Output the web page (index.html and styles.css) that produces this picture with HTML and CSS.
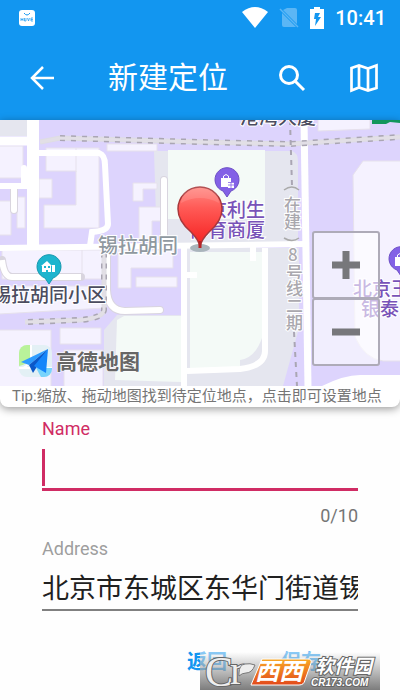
FILE: index.html
```html
<!DOCTYPE html>
<html lang="zh-CN">
<head>
  <meta charset="UTF-8">
  <meta name="viewport" content="width=device-width, initial-scale=1.0">
  <title>新建定位</title>
  <link rel="stylesheet" href="styles.css">
</head>
<body>
  <header class="app-header">
    <!-- Status bar -->
    <div class="status-bar">
      <svg class="notification" width="16" height="16" viewBox="0 0 16 16">
        <rect width="16" height="16" rx="3" fill="#fff"/>
        <path d="M5 3q3 4 6 0" fill="none" stroke="#1296f0"/>
        <path d="M2 8v3M2 9.5h2M4 8v3M5.5 8v3H7V8M8.5 8l1 3 1-3M12 8v3h2M12 9.5h2M12 8h2" fill="none" stroke="#1296f0" stroke-width=".7"/>
      </svg>
      <svg width="26" height="22" viewBox="0 0 26 22">
        <path d="M0 5Q13-5 26 5L13 21z" fill="#fff"/>
      </svg>
      <svg width="20" height="22" viewBox="0 0 20 22">
        <path d="M8 1h8q2 0 2 2v14L4 3zM3 6l14 14H5q-2 0-2-2z" fill="#5bb6f5"/>
        <path d="M1 2l18 18" stroke="#5bb6f5" stroke-width="1.5"/>
      </svg>
      <svg width="14" height="22" viewBox="0 0 14 22">
        <path d="M4 0h6v2h4v20H0V2h4z" fill="#fff"/>
        <path d="M5 6h5L8 10h3L5 19l1-7H4z" fill="#1296f0"/>
      </svg>
      <span class="clock">10:41</span>
    </div>

    <!-- Toolbar -->
    <div class="toolbar">
      <button class="icon-button" type="button" aria-label="Back">
        <svg width="28" height="28" viewBox="0 0 28 28" fill="none" stroke="#fff" stroke-width="2.5">
          <path d="M26 14H4M15 3L4 14l11 11"/>
        </svg>
      </button>
      <h1>新建定位</h1>
      <button class="icon-button" type="button" aria-label="Search">
        <svg width="28" height="28" viewBox="0 0 28 28" fill="none" stroke="#fff" stroke-width="3">
          <circle cx="11" cy="11" r="8.5"/>
          <path d="M17 17l9 9"/>
        </svg>
      </button>
      <button class="icon-button" type="button" aria-label="Map">
        <svg width="30" height="30" viewBox="0 0 30 30" fill="none" stroke="#fff" stroke-width="2.7">
          <path d="M2.5 5L10 2.500l9 3 8.500-3V25L19 27.500l-9-3-7.500 3zM10 2.500v22M19 5.500v22"/>
        </svg>
      </button>
    </div>
  </header>

  <!-- Map card -->
  <section class="map-card">
    <div class="map">
      <svg class="map-canvas" viewBox="0 120 400 266" preserveAspectRatio="xMidYMid slice">
        <defs>
          <linearGradient id="pinFill" x1="0" y1="0" x2="0" y2="1">
            <stop offset="0" stop-color="#ff8a84"/>
            <stop offset=".35" stop-color="#ff5a56"/>
            <stop offset="1" stop-color="#f51d1d"/>
          </linearGradient>
          <clipPath id="logoClip"><rect x="19" y="345" width="33" height="32" rx="8"/></clipPath>
        </defs>

        <rect y="120" width="400" height="266" fill="#ddd4fd"/>

        <!-- Grey plots -->
        <g fill="#e5e6ef">
          <path d="M0 120h27v16H0z"/>
          <path d="M154 151h138q6 2 6 10v83H168v-28h-12z"/>
          <path d="M187 248h112v80l-16 58H187z"/>
          <path d="M104 330l13-15h65v71h-78z"/>
        </g>

        <!-- Green plots -->
        <g fill="#f4faf7">
          <path d="M168 150h97v69h-97z"/>
          <path d="M117 320l7-4h57v66l-66-2z"/>
          <path d="M190 252h72v86q-7 20-22 22v7l-50 3z"/>
        </g>

        <!-- Buildings -->
        <g fill="#f5f2ff" stroke="#e6e1ec">
          <path d="M-1 146h24v32H-1zM-1 201h12v34H-1zM17 197h8v31h-8z"/>
          <path d="M46 148h53v80H44v-23h32v-34H46zM76 148v24M39 179h13v19H39z"/>
          <path d="M107 144h50v7h-50zM133 183h24v6h-14v12h-10zM139 207h22v14h-9v18h-13z"/>
          <path d="M2 250h103v29H2zM-1 286h106v22l-106 6z"/>
          <path d="M82 250v29M118 250h55v18h-42v20h-13zM136 277h41v10h-41z"/>
          <path d="M-1 330h52v57H-1zM60 328h41v16H60zM64 350h39v37H64z"/>
          <path d="M318 115h52v14l-52 2z"/>
          <path d="M363 161h38v200h-18q-18-2-28-24l-2-162z"/>
        </g>

        <!-- Roads -->
        <g fill="none" stroke="#d9d5df" stroke-width="8" stroke-linecap="round">
          <path d="M164 180v66M107 250v40q1 21 18 21l35-1M2 260q2 17 10 17h69M14 188v22"/>
        </g>
        <g fill="none" stroke="#fff" stroke-width="6">
          <path d="M33 119v128" stroke-width="12"/>
          <path d="M0 141h30" stroke-width="9"/>
          <path d="M0 186h30M14 188v22M24 168v18" stroke-linecap="round"/>
          <path d="M38 153h61q6 2 6 12l3 59q0 7-16 8l-2 14"/>
          <path d="M164 180v66M107 250v40q1 21 18 21l35-1" stroke-linecap="round"/>
          <path d="M2 260q2 17 10 17h69"/>
          <path d="M184 246v140M187 371l53-2q25-3 25-18V248M253 246v15M187 275h10"/>
          <path d="M0 248l306-4"/>
          <path d="M304 119l4 268" stroke-width="7"/>
        </g>
        <path d="M322 386q22-11 38-11h40v11z" fill="#fff"/>

        <!-- Railway and metro lines -->
        <g fill="none">
          <path d="M40 142l20-4 140 4 90 2 110-7M25 322l55-2q23-2 24-10V250" stroke="#dedde3" stroke-width="5"/>
          <path d="M60 138l140 4 90 2 110-7M28 322l52-2q23-2 24-10V250" stroke="#aaa6b3" stroke-width="6" stroke-dasharray="5 6"/>
          <path d="M40 142l20-4 140 4 90 2 110-7M25 322l55-2q23-2 24-10V250" stroke="#e2dfe6" stroke-width="3"/>
          <path d="M290 120l2 66M294 332l3 54" stroke="#aaa6b3" stroke-width="2" stroke-dasharray="5 5"/>
        </g>

        <!-- Labels -->
        <g class="label">
          <text class="label-dark" x="240" y="124">港湾大厦</text>
          <text class="label-road" x="98" y="253">锡拉胡同</text>
          <text class="label-dark" x="-8" y="302">锡拉胡同小区</text>
          <text class="label-shop" x="208" y="217">京利生</text>
          <text class="label-shop" x="189" y="237">体育商厦</text>
          <text class="label-shop" x="353" y="296">北京王府</text>
          <text class="label-shop" x="361" y="316">银泰in</text>
          <text class="label-metro" x="284 284" y="211 228">在建</text>
          <text class="label-metro" x="288 286 286 286 286" y="261 279 295 312 329">8号线二期</text>
        </g>
        <path d="M284 190q8-6 15 0M284 238q8 5 15 0" fill="none" stroke="#aaa" stroke-width="1.5"/>
        <path d="M372 120h28v3l-10-1-4 2h-14z" fill="#12965c"/>

        <!-- Places -->
        <g id="shop">
          <path d="M227 197l-4-6a12 12 0 1 1 8 0z" fill="#8361e6" stroke="#6c4fc5"/>
          <path d="M221 178h10v9h-10zM228 182h6v6h-6z" fill="#fff"/>
          <path d="M223.5 178v-2q2.5-3 5 0v2" fill="none" stroke="#fff"/>
          <path d="M228 182.5h6M231 182v6M228 185h6" stroke="#8361e6" stroke-width=".8"/>
        </g>
        <use href="#shop" x="174" y="79"/>
        <path d="M49 284l-4-6a12 12 0 1 1 8 0z" fill="#1db5ce" stroke="#1598ae"/>
        <path d="M41 266l6-5 5 5h-1v6h-9v-6zM52 265h3v7h-3z" fill="#fff"/>
        <path d="M44 266h2v2h-2zM48 266h2v2h-2zM46 270h2v2h-2z" fill="#1db5ce"/>

        <!-- Provider logo -->
        <g clip-path="url(#logoClip)">
          <rect x="19" y="345" width="33" height="32" fill="#e3f0f5"/>
          <path d="M19 345h12v12q-4 8-12 9z" fill="#b9f29a"/>
          <path d="M31 345v14q-4 10-12 9M19 368h33" fill="none" stroke="#fff" stroke-width="2"/>
          <path d="M36 368h16v9H41z" fill="#79d4fb"/>
        </g>
        <path d="M48 349L21 362l8 3z" fill="#2d9cff"/>
        <path d="M48 349l-19 16 4 8z" fill="#0b58c8"/>
        <path d="M48 349l-14 17 12 7z" fill="#1585fa"/>
        <text class="provider" x="56" y="369">高德地图</text>

        <!-- Pin -->
        <ellipse cx="200" cy="248" rx="10" ry="4" fill="#aab5bc"/>
        <path d="M200 247q-1-7-9-15-13-11-13-23a22 22 0 0 1 44 0q0 12-13 23-8 8-9 15z" fill="url(#pinFill)" stroke="#a8383b" stroke-width="1.5"/>
        <path d="M181 203a19 19 0 0 1 38 0q-19-10-38 0z" fill="#fff" opacity=".12"/>
        <path d="M200 241v7" stroke="#b52427" stroke-width="3"/>
      </svg>

      <div class="zoom-controls">
        <button type="button" aria-label="Zoom in">
          <svg width="30" height="30" viewBox="0 0 30 30"><path d="M1 15h28M15 1v28" stroke="#77777b" stroke-width="7"/></svg>
        </button>
        <button type="button" aria-label="Zoom out">
          <svg width="30" height="30" viewBox="0 0 30 30"><path d="M1 15h28" stroke="#77777b" stroke-width="7"/></svg>
        </button>
      </div>
    </div>
    <p class="tip">Tip:缩放、拖动地图找到待定位地点，点击即可设置地点</p>
  </section>

  <!-- Location form -->
  <form class="location-form">
    <div class="field field-active">
      <label for="name">Name</label>
      <input type="text" id="name" maxlength="10">
      <span class="counter">0/10</span>
    </div>
    <div class="field">
      <label for="address">Address</label>
      <input type="text" id="address" value="北京市东城区东华门街道锡拉胡同">
    </div>
    <div class="actions">
      <button type="button">返回</button>
      <button type="button">保存</button>
    </div>
  </form>

  <!-- Site badge -->
  <div class="site-badge">
    <svg viewBox="0 0 180 38" width="180" height="38">
      <defs>
        <linearGradient id="orangeFill" x1="0" y1="0" x2="0" y2="1">
          <stop offset="0" stop-color="#f9a825"/>
          <stop offset="1" stop-color="#e2491b"/>
        </linearGradient>
      </defs>
      <text class="badge-c" x="5" y="34">C</text>
      <text class="badge-r" x="30" y="32">r</text>
      <path d="M39 21q0-8 6-9 5-1 10 1-3 8-9 8-4 0-7 3z" fill="#eee" stroke="#777"/>
      <path d="M62 7h46q4 0 3 4l-6 17q-1 5-6 5H51z" fill="url(#orangeFill)" stroke="#fff"/>
      <text class="badge-name" x="55" y="28">西西</text>
      <text class="badge-soft" x="115" y="21">软件园</text>
      <text class="badge-url" x="111" y="34">CR173.COM</text>
    </svg>
  </div>
</body>
</html>
```
FILE: styles.css
```css
* {
  box-sizing: border-box;
}

body {
  position: relative;
  min-height: 100vh;
  margin: 0;
  background: #fefefe;
  font-family: Roboto, "Noto Sans CJK SC", sans-serif;
  color: #212121;
}

button {
  padding: 0;
  border: 0;
  background: none;
  font-family: inherit;
}

svg {
  display: block;
}

.app-header {
  background: #1296f0;
  color: #fff;
}

.status-bar {
  display: flex;
  align-items: center;
  gap: 11px;
  height: 36px;
  padding: 0 14px 0 19px;
}

.notification {
  margin-right: auto;
}

.clock {
  font-size: 20px;
  font-weight: 500;
}

.toolbar {
  display: flex;
  align-items: center;
  height: 84px;
  padding: 0 12px 0 18px;
}

.toolbar h1 {
  flex: 1;
  margin: 0 0 0 42px;
  font-size: 30px;
  font-weight: 400;
  line-height: 40px;
}

.icon-button {
  display: flex;
  align-items: center;
  justify-content: center;
  width: 48px;
  height: 48px;
}

.icon-button + .icon-button {
  margin-left: 24px;
}

.map-card {
  overflow: hidden;
  background: #fff;
  border-radius: 0 0 8px 8px;
  box-shadow: 0 2px 8px rgba(0, 0, 0, 0.4);
}

.map {
  position: relative;
}

.map-canvas {
  width: 100%;
}

.label text {
  font-family: "Noto Sans CJK SC", sans-serif;
  font-size: 19px;
  font-weight: 500;
  stroke: #fff;
  stroke-width: 2px;
  paint-order: stroke;
}

.label .label-dark {
  fill: #4b4c5f;
}

.label .label-road {
  fill: #8f989f;
  font-size: 20px;
}

.label .label-shop {
  fill: #7852b8;
}

.label .label-metro {
  fill: #aaa8ae;
  font-size: 17px;
}

.provider {
  fill: #666;
  stroke: #fff;
  stroke-width: 1px;
  paint-order: stroke;
  font-family: "Noto Sans CJK SC", sans-serif;
  font-size: 21px;
  font-weight: 700;
}

.zoom-controls {
  position: absolute;
  right: 20px;
  bottom: 20px;
}

.zoom-controls button {
  display: flex;
  align-items: center;
  justify-content: center;
  width: 68px;
  height: 68px;
  border: 2px solid #aeabb8;
  border-radius: 3px;
  background: rgba(255, 255, 255, 0.6);
}

.zoom-controls button + button {
  margin-top: -1px;
}

.tip {
  margin: 0;
  padding: 0 12px;
  overflow: hidden;
  color: #757575;
  font-size: 15px;
  line-height: 21px;
  white-space: nowrap;
}

.location-form {
  padding: 11px 42px 0;
}

.field {
  display: flex;
  flex-direction: column;
  margin-bottom: 12px;
}

.field label,
.counter {
  color: #9e9e9e;
  font-size: 18px;
  line-height: 21px;
}

.field input {
  width: 100%;
  height: 52px;
  padding: 4px 0 0;
  border: 0;
  border-bottom: 2px solid #808080;
  border-radius: 0;
  outline: none;
  background: none;
  color: #212121;
  font-family: inherit;
  font-size: 27px;
}

.field-active label {
  color: #d02c64;
}

.field-active input {
  border-bottom: 3px solid #d02c64;
  /* text caret */
  background: linear-gradient(#d02c64, #d02c64) left 10px / 3px 37px no-repeat;
  caret-color: transparent;
}

.field-active .counter {
  margin-top: 14px;
  color: #757575;
  text-align: right;
}

.actions {
  display: flex;
  justify-content: flex-end;
  gap: 54px;
  padding: 24px 37px 0 0;
}

.actions button {
  color: #1296f0;
  font-size: 20px;
  font-weight: 700;
  line-height: 30px;
}

.site-badge {
  position: absolute;
  right: 20px;
  top: 652px;
  background: linear-gradient(rgba(255, 255, 255, 0.5), rgba(110, 110, 110, 0.9));
}

.site-badge text {
  font-family: "Liberation Sans", "Noto Sans CJK SC", sans-serif;
  font-weight: 700;
  fill: #fff;
  stroke: #666;
  stroke-width: 2px;
  paint-order: stroke;
}

.site-badge .badge-c,
.site-badge .badge-r {
  font-family: "Liberation Serif", serif;
  font-size: 42px;
  font-weight: 400;
  fill: #eee;
}

.site-badge .badge-name {
  font-size: 24px;
  font-style: italic;
  stroke: none;
}

.site-badge .badge-soft {
  font-size: 19px;
  font-style: italic;
}

.site-badge .badge-url {
  font-size: 10px;
  font-style: italic;
}
```
